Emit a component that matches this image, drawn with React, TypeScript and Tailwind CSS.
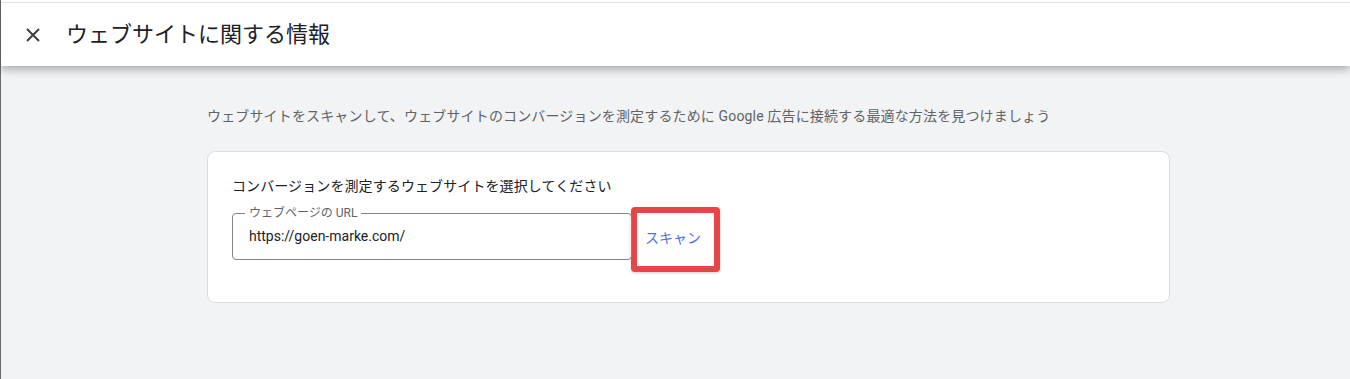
import React from 'react';

const font = { fontFamily: 'Roboto, "Noto Sans CJK JP", sans-serif' };

const CloseIcon = () => (
  <svg width="14" height="14" viewBox="0 0 14 14" className="text-[#3c4043]">
    <path d="M1 1L13 13M13 1L1 13" stroke="currentColor" strokeWidth="2" />
  </svg>
);

const UrlField = ({ label, value }) => (
  <div className="relative w-[400px] h-[47px] border border-[#80868b] rounded-[4px] flex items-center pl-[16px]">
    <span className="absolute -top-[9px] left-[12px] px-[4px] bg-white text-[12px] leading-[16px] text-[#5f6368]">
      {label}
    </span>
    <span className="text-[14px] text-[#202124]">{value}</span>
  </div>
);

export default function App() {
  return (
    <div style={font} className="min-h-[379px] bg-[#f1f3f4] border-l border-[#6b6b6b]">
      <header className="bg-white pt-[2px] shadow-[0_4px_8px_rgba(0,0,0,0.28)] relative z-10">
        <div className="h-[64px] border-t border-[#e2e2e2] flex items-center">
          <button className="w-[14px] h-[14px] ml-[25px] flex items-center justify-center">
            <CloseIcon />
          </button>
          <h1 className="ml-[26px] text-[22px] text-[#202124] leading-[28px]">ウェブサイトに関する情報</h1>
        </div>
      </header>

      <main className="pl-[206px] pt-[40px] pb-[60px]">
        <p className="text-[14px] leading-[20px] text-[#5f6368] tracking-[0.15px]">
          ウェブサイトをスキャンして、ウェブサイトのコンバージョンを測定するために Google 広告に接続する最適な方法を見つけましょう
        </p>

        <section className="mt-[25px] w-[963px] bg-white border border-[#dadce0] rounded-[8px] pt-[24px] pb-[42px] pl-[24px]">
          <h2 className="text-[14px] leading-[20px] text-[#202124] tracking-[0.1px]">
            コンバージョンを測定するウェブサイトを選択してください
          </h2>
          <div className="mt-[17px] flex items-start">
            <UrlField label="ウェブページの URL" value="https://goen-marke.com/" />
            <div className="-mt-[6px] -mb-[12px] -ml-[1px] w-[89px] h-[65px] border-[6px] border-[#e64646] rounded-[4px] bg-white shadow-[0_1px_3px_rgba(0,0,0,0.2)] pl-[8px] pt-[13px]">
              <button className="text-[14px] leading-[20px] text-[#4f6ee6]">スキャン</button>
            </div>
          </div>
        </section>
      </main>
    </div>
  );
}
